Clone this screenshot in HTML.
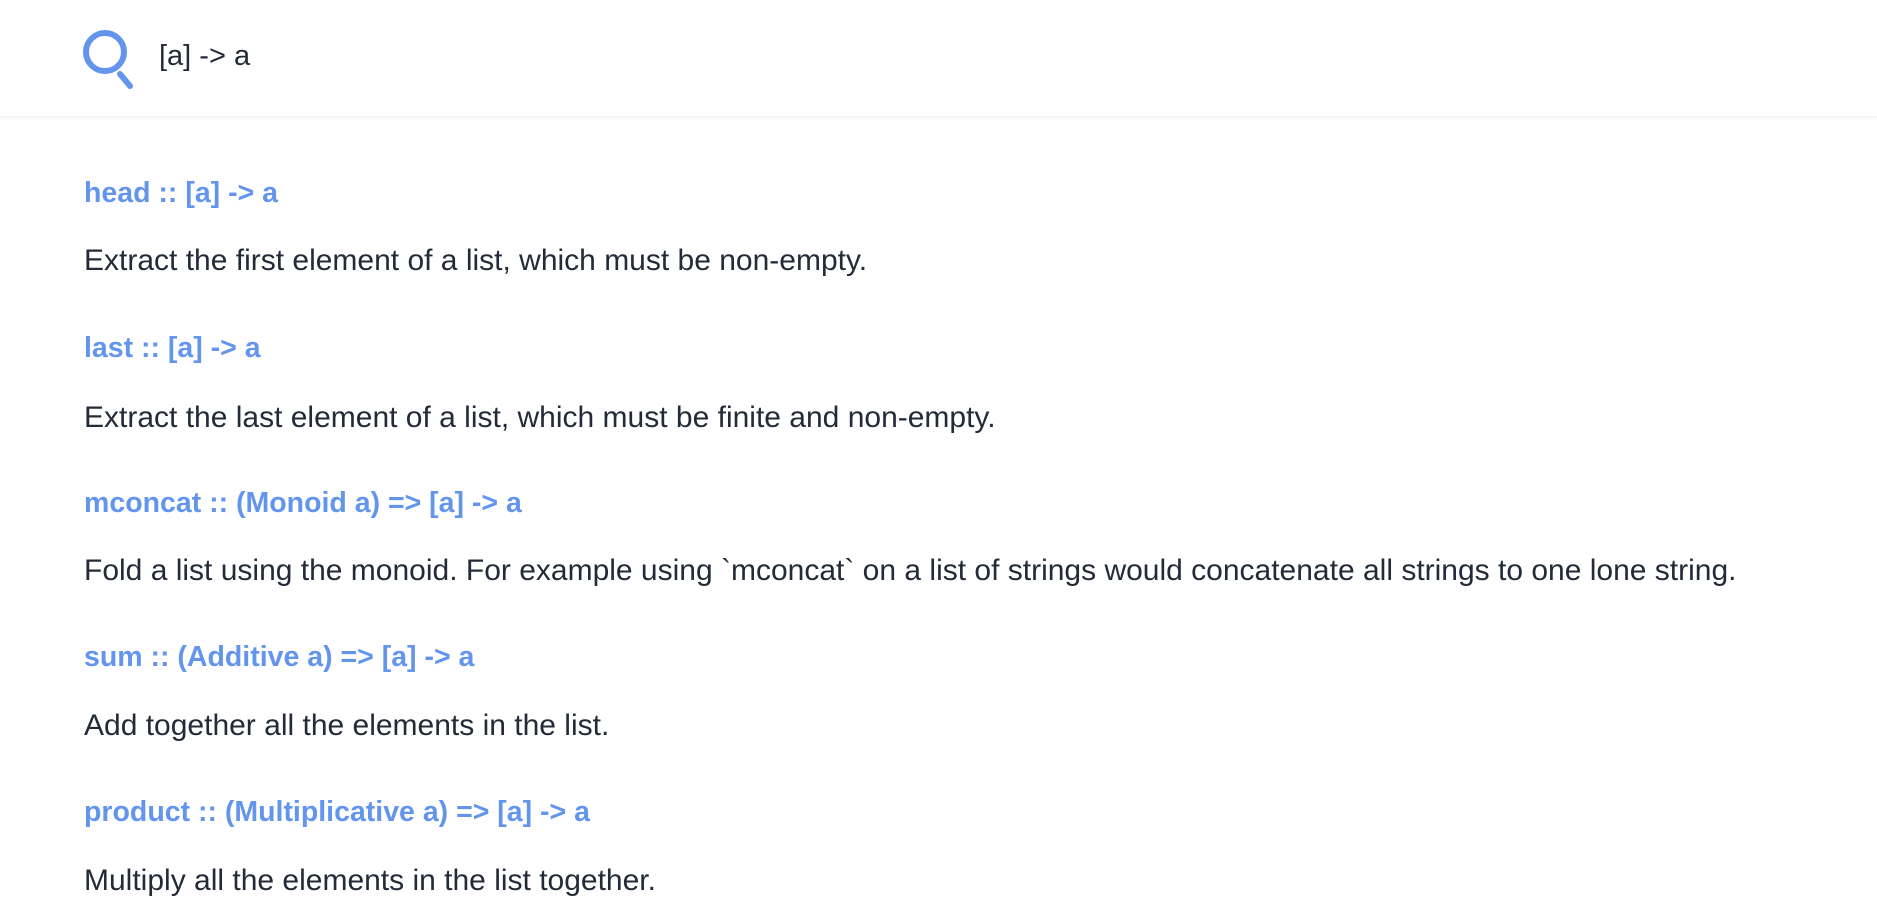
<!DOCTYPE html>
<html><head><meta charset="utf-8"><style>
html,body{margin:0;padding:0;background:#fff;width:1877px;height:914px;overflow:hidden;font-family:"Liberation Sans",sans-serif;}
.hdr{position:absolute;left:0;top:0;width:1877px;height:116px;background:#fff;box-shadow:0 2px 3px rgba(0,0,0,0.04);border-bottom:1px solid #f3f4f7;}
.q{position:absolute;left:159px;top:40px;font-size:29px;color:#232b38;}
.t{position:absolute;left:84px;font-size:28.5px;color:#6495ed;font-weight:bold;letter-spacing:0px;}
.d{position:absolute;left:84px;font-size:30px;color:#232b38;letter-spacing:0px;}
</style></head><body>
<div class="hdr">
<svg style="position:absolute;left:80px;top:28px" width="60" height="64" viewBox="0 0 60 64">
<circle cx="25" cy="24" r="19" fill="none" stroke="#6495ed" stroke-width="6"/>
<line x1="40" y1="46" x2="50" y2="58" stroke="#6495ed" stroke-width="6" stroke-linecap="round"/>
</svg>
<div class="q">[a] -&gt; a</div>
</div>
<div class="t" style="top:177px">head :: [a] -&gt; a</div>
<div class="d" style="top:244px">Extract the first element of a list, which must be non-empty.</div>
<div class="t" style="top:332px">last :: [a] -&gt; a</div>
<div class="d" style="top:401px">Extract the last element of a list, which must be finite and non-empty.</div>
<div class="t" style="top:487px">mconcat :: (Monoid a) =&gt; [a] -&gt; a</div>
<div class="d" style="top:554px">Fold a list using the monoid. For example using `mconcat` on a list of strings would concatenate all strings to one lone string.</div>
<div class="t" style="top:641px">sum :: (Additive a) =&gt; [a] -&gt; a</div>
<div class="d" style="top:709px">Add together all the elements in the list.</div>
<div class="t" style="top:796px">product :: (Multiplicative a) =&gt; [a] -&gt; a</div>
<div class="d" style="top:864px">Multiply all the elements in the list together.</div>
</body></html>
